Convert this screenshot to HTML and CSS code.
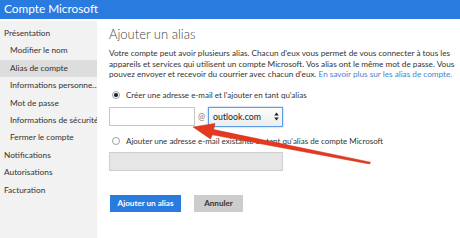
FILE: index.html
```html
<!DOCTYPE html>
<html lang="fr">
<head>
<meta charset="utf-8">
<title>Compte Microsoft</title>
<link rel="stylesheet" href="styles.css">
</head>
<body>
<div class="page">
  <header class="topbar"><span class="brand">Compte Microsoft</span></header>
  <div class="layout">
    <nav class="sidebar">
      <div class="nav-item top">Présentation</div>
      <div class="nav-item sub">Modifier le nom</div>
      <div class="nav-item sub active">Alias de compte</div>
      <div class="nav-item sub">Informations personne...</div>
      <div class="nav-item sub">Mot de passe</div>
      <div class="nav-item sub">Informations de sécurité</div>
      <div class="nav-item sub">Fermer le compte</div>
      <div class="nav-item top">Notifications</div>
      <div class="nav-item top">Autorisations</div>
      <div class="nav-item top">Facturation</div>
    </nav>
    <main class="main">
      <h1 class="title">Ajouter un alias</h1>
      <p class="intro">Votre compte peut avoir plusieurs alias. Chacun d'eux vous permet de vous connecter à tous les<br>appareils et services qui utilisent un compte Microsoft. Vos alias ont le même mot de passe. Vous<br>pouvez envoyer et recevoir du courrier avec chacun d'eux. <a class="link" href="#">En savoir plus sur les alias de compte.</a></p>
      <div class="radio-row first">
        <span class="radio checked"></span>
        <span class="radio-label">Créer une adresse e-mail et l'ajouter en tant qu'alias</span>
      </div>
      <div class="field-row">
        <div class="textbox"></div>
        <span class="at">@</span>
        <div class="select">
          <span class="select-text">outlook.com</span>
          <svg class="select-arrows" width="5" height="9" viewBox="0 0 5 9"><path d="M2.5 0.5 L4.8 3.6 L0.2 3.6 Z M2.5 8.5 L4.8 5.4 L0.2 5.4 Z" fill="#222"/></svg>
        </div>
      </div>
      <div class="radio-row second">
        <span class="radio"></span>
        <span class="radio-label">Ajouter une adresse e-mail existante en tant qu'alias de compte Microsoft</span>
      </div>
      <div class="textbox disabled"></div>
      <div class="actions">
        <button class="btn primary">Ajouter un alias</button>
        <button class="btn secondary">Annuler</button>
      </div>
    </main>
  </div>
  <svg class="arrow" width="460" height="238" viewBox="0 0 460 238">
    <path d="M193 127 L215 123.5 L213.6 129.6 L370.4 162.2 L369.6 164 L212.4 134.8 L210.5 139 Z" fill="#e5391f" stroke="#c92a14" stroke-width="0.5" stroke-linejoin="round"/>
  </svg>
</div>
</body>
</html>
```
FILE: styles.css
```css
* { box-sizing: border-box; }
html, body { margin: 0; padding: 0; background: #ffffff; }
body { font-family: "Lato", "Open Sans", sans-serif; color: #333333; }
.page { position: relative; width: 460px; height: 238px; overflow: hidden; }
.topbar { height: 19px; background: #2a7be0; padding: 0 0 1px 4px; display: flex; align-items: center; }
.brand { color: #ffffff; font-size: 11.8px; line-height: 16px; }
.layout { display: flex; margin-top: 2px; height: 217px; }
.sidebar { width: 97px; background: #f2f2f2; padding-top: 4px; }
.nav-item { height: 17.4px; line-height: 17.4px; font-size: 8.3px; white-space: nowrap; overflow: hidden; color: #333; }
.nav-item.top { padding-left: 4px; }
.nav-item.sub { padding-left: 10px; }
.nav-item.active { background: #dddddd; }
.main { flex: 1; padding: 4px 0 0 12px; }
.title { margin: 0; font-size: 13px; font-weight: 300; line-height: 18px; color: #444; }
.intro { margin: 5px 0 0; font-size: 8.2px; line-height: 10.6px; white-space: nowrap; color: #333; }
.link { color: #3f86cc; text-decoration: none; }
.radio-row { display: flex; align-items: center; height: 12px; font-size: 8px; }
.radio-row.first { margin-top: 9px; }
.radio-row.second { margin-top: 8px; }
.radio { width: 8px; height: 8px; border: 1px solid #a0a0a0; border-radius: 50%; background: #fff; margin-left: 3px; margin-right: 6px; display: flex; align-items: center; justify-content: center; }
.radio.checked::after { content: ""; width: 3.5px; height: 3.5px; border-radius: 50%; background: #222; }
.field-row { display: flex; align-items: center; margin-top: 6px; height: 20px; }
.textbox { width: 86px; height: 19px; border: 1px solid #c6c6c6; background: #fff; }
.textbox.disabled { width: 174px; margin-top: 5px; background: #e6e6e6; border-color: #cfcfcf; }
.at { font-size: 8.5px; color: #777; width: 13px; text-align: center; }
.select { width: 75px; height: 20px; border: 1px solid #5e9de6; box-shadow: 0 0 2px #8ebcf0; background: linear-gradient(#fbfbfb, #eeeeee); display: flex; align-items: center; justify-content: space-between; padding: 0 3px 0 4px; }
.select-text { font-size: 8.8px; color: #222; }
.actions { display: flex; gap: 13px; margin-top: 24px; }
.btn { font-family: inherit; border: 0; height: 17px; padding: 0; font-size: 8.1px; font-weight: 700; }
.btn.primary { width: 71px; background: #2a7be0; color: #fff; margin-left: 1px; }
.btn.secondary { width: 49px; background: #cccccc; color: #333; }
.arrow { position: absolute; left: 0; top: 0; pointer-events: none; }
```
